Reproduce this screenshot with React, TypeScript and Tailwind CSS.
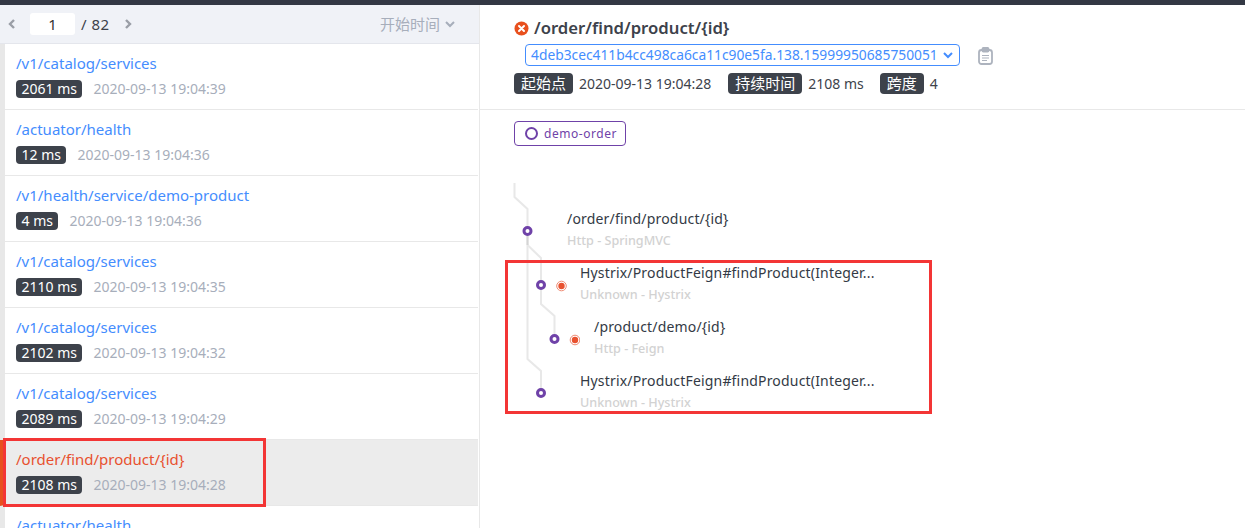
const font = "font-['Noto_Sans','Noto_Sans_CJK_SC',sans-serif]";

const segments = [
  { path: "/v1/catalog/services", ms: "2061 ms", time: "2020-09-13 19:04:39" },
  { path: "/actuator/health", ms: "12 ms", time: "2020-09-13 19:04:36" },
  { path: "/v1/health/service/demo-product", ms: "4 ms", time: "2020-09-13 19:04:36" },
  { path: "/v1/catalog/services", ms: "2110 ms", time: "2020-09-13 19:04:35" },
  { path: "/v1/catalog/services", ms: "2102 ms", time: "2020-09-13 19:04:32" },
  { path: "/v1/catalog/services", ms: "2089 ms", time: "2020-09-13 19:04:29" },
  { path: "/order/find/product/{id}", ms: "2108 ms", time: "2020-09-13 19:04:28", active: true },
  { path: "/actuator/health", ms: "", time: "" },
];

const spans = [
  { title: "/order/find/product/{id}", sub: "Http - SpringMVC", pad: "pl-[87px]" },
  { title: "Hystrix/ProductFeign#findProduct(Integer...", sub: "Unknown - Hystrix", pad: "pl-[100px]" },
  { title: "/product/demo/{id}", sub: "Http - Feign", pad: "pl-[114px]" },
  { title: "Hystrix/ProductFeign#findProduct(Integer...", sub: "Unknown - Hystrix", pad: "pl-[100px]" },
];

function Tag({ children }: { children: React.ReactNode }) {
  return (
    <span className="inline-block h-[21px] rounded-[4px] bg-[#3d424b] px-[7px] text-[15px] leading-[20px] text-white">
      {children}
    </span>
  );
}

function SegmentRow({ path, ms, time, active }: { path: string; ms: string; time: string; active?: boolean }) {
  return (
    <div
      className={`h-[66px] border-b border-l-[5px] border-b-[#e8e8e8] pl-[11px] pt-[9px] ${
        active ? "border-l-[#e8501e] bg-[#ececec]" : "border-l-[#e8e8e8] bg-white"
      }`}
    >
      <div className={`text-[15px] leading-[21px] ${active ? "text-[#e8512f]" : "text-[#448dfe]"}`}>{path}</div>
      {ms && (
        <div className="mt-[6px] flex items-center gap-[11px]">
          <span className="h-[18px] rounded-[4px] bg-[#3d424b] px-[5.5px] text-[14px] leading-[18px] text-white">{ms}</span>
          <span className="text-[14px] leading-[18px] text-[#a7aebb]">{time}</span>
        </div>
      )}
    </div>
  );
}

function TraceLines() {
  return (
    <svg className="absolute left-[480px] top-[170px]" width="100" height="240" viewBox="480 170 100 240" fill="none">
      <g stroke="#e8e8e8" strokeWidth="2">
        <path d="M514.5 183V197L527.5 209V359L541 371V393" />
        <path d="M527.5 245L541 258V304L554.5 316V339" />
      </g>
      <path d="M527.5 231V245" stroke="#d4d4d4" strokeWidth="2" />
      <g fill="#fff" stroke="#6f42a8" strokeWidth="3">
        <circle cx="527.5" cy="231" r="3.5" />
        <circle cx="541" cy="285" r="3.5" />
        <circle cx="554.5" cy="339" r="3.5" />
        <circle cx="541" cy="393" r="3.5" />
      </g>
      {[286, 340].map((cy, i) => (
        <g key={cy}>
          <circle cx={i === 0 ? 561.5 : 575} cy={cy} r="4.8" fill="#fff" stroke="#ef8a73" strokeWidth="1" />
          <circle cx={i === 0 ? 561.5 : 575} cy={cy} r="3.2" fill="#e8512f" />
        </g>
      ))}
    </svg>
  );
}

export default function App() {
  return (
    <div className={`relative h-[528px] w-[1245px] overflow-hidden bg-white ${font}`}>
      <div className="h-[5px] bg-[#333844]" />
      <div className="flex h-[523px]">
        {/* Left list */}
        <div className="w-[480px] shrink-0 border-r border-[#e8e8e8]">
          <div className="flex h-[39px] items-center border-b border-[#e4e6ec] bg-[#f0f2f7] pl-[7px] pr-[23px]">
            <svg width="10" height="12" viewBox="0 0 10 12" fill="none" stroke="#9a9ea6" strokeWidth="2.4">
              <path d="M7 2L3 6l4 4" />
            </svg>
            <div className="ml-[13px] h-[22px] w-[45px] rounded-[3px] bg-white text-center text-[15px] leading-[22px] text-[#333]">1</div>
            <span className="ml-[6px] text-[15px] tracking-[0.5px] text-[#3d424b]">/ 82</span>
            <svg className="ml-[13px]" width="10" height="12" viewBox="0 0 10 12" fill="none" stroke="#9a9ea6" strokeWidth="2.4">
              <path d="M3 2l4 4-4 4" />
            </svg>
            <span className="ml-auto text-[15px] text-[#a7aebb]">开始时间</span>
            <svg className="ml-[4px]" width="12" height="10" viewBox="0 0 12 10" fill="none" stroke="#a7aebb" strokeWidth="2">
              <path d="M2 3l4 4 4-4" />
            </svg>
          </div>
          <div className="mr-[1px]">
            {segments.map((s, i) => (
              <SegmentRow key={i} {...s} />
            ))}
          </div>
        </div>

        {/* Right detail */}
        <div className="flex-1">
          <div className="h-[105px] border-b border-[#e8e8e8] pl-[34px] pt-[12px]">
            <div className="flex h-[22px] items-center gap-[5px]">
              <svg width="15" height="15" viewBox="0 0 15 15">
                <circle cx="7.5" cy="7.5" r="7" fill="#e8501e" />
                <path d="M5 5l5 5M10 5l-5 5" stroke="#fff" strokeWidth="2" strokeLinecap="round" />
              </svg>
              <span className="text-[16.7px] font-semibold text-[#3d424b]">/order/find/product/{"{id}"}</span>
            </div>
            <div className="mt-[5px] flex items-center">
              <div className="ml-[11px] flex h-[22px] w-[435px] items-center rounded-[4px] border border-[#448dfe] pl-[5px] text-[13.8px] text-[#448dfe]">
                <span className="whitespace-nowrap">4deb3cec411b4cc498ca6ca11c90e5fa.138.15999950685750051</span>
                <svg className="ml-[5px] shrink-0" width="10" height="8" viewBox="0 0 10 8" fill="none" stroke="#448dfe" strokeWidth="2">
                  <path d="M1 2l4 4 4-4" />
                </svg>
              </div>
              <svg className="ml-[18px] mt-[2px]" width="15" height="18" viewBox="0 0 15 18" fill="none" stroke="#adb3be" strokeWidth="1.8">
                <rect x="1" y="3" width="13" height="14" rx="2.5" />
                <rect x="4.5" y="1" width="6" height="3.5" rx="0.8" fill="#adb3be" />
                <path d="M4 8.5h7M4 11h7M4 13.5h5" strokeWidth="1" />
              </svg>
            </div>
            <div className="mt-[7px] flex items-center text-[14px] text-[#3d424b]">
              <Tag>起始点</Tag>
              <span className="ml-[6px]">2020-09-13 19:04:28</span>
              <span className="ml-[17px]"><Tag>持续时间</Tag></span>
              <span className="ml-[6px]">2108 ms</span>
              <span className="ml-[16px]"><Tag>跨度</Tag></span>
              <span className="ml-[6px]">4</span>
            </div>
          </div>

          <div className="pl-[34px] pt-[11px]">
            <div className="flex h-[25px] w-[112px] items-center gap-[6px] rounded-[4px] border border-[#6f42a8] pl-[10px] text-[12px] tracking-[0.55px] text-[#6f42a8]">
              <span className="h-[13px] w-[13px] rounded-full border-2 border-[#6f42a8]" />
              demo-order
            </div>
          </div>

          <div className="pt-[62px]">
            {spans.map((s, i) => (
              <div key={i} className={`h-[54px] ${s.pad}`}>
                <div className="text-[14px] leading-[21px] tracking-[0.18px] text-[#333a45]">{s.title}</div>
                <div className="mt-[3px] text-[12.6px] font-medium leading-[18px] text-[#d2d2d2]">{s.sub}</div>
              </div>
            ))}
          </div>
        </div>
      </div>

      <TraceLines />

      {/* Annotation boxes */}
      <div className="absolute left-[3px] top-[438px] h-[69px] w-[263px] border-[3px] border-[#f33535]" />
      <div className="absolute left-[505px] top-[260px] h-[154px] w-[427px] border-[3px] border-[#f33535]" />
    </div>
  );
}
